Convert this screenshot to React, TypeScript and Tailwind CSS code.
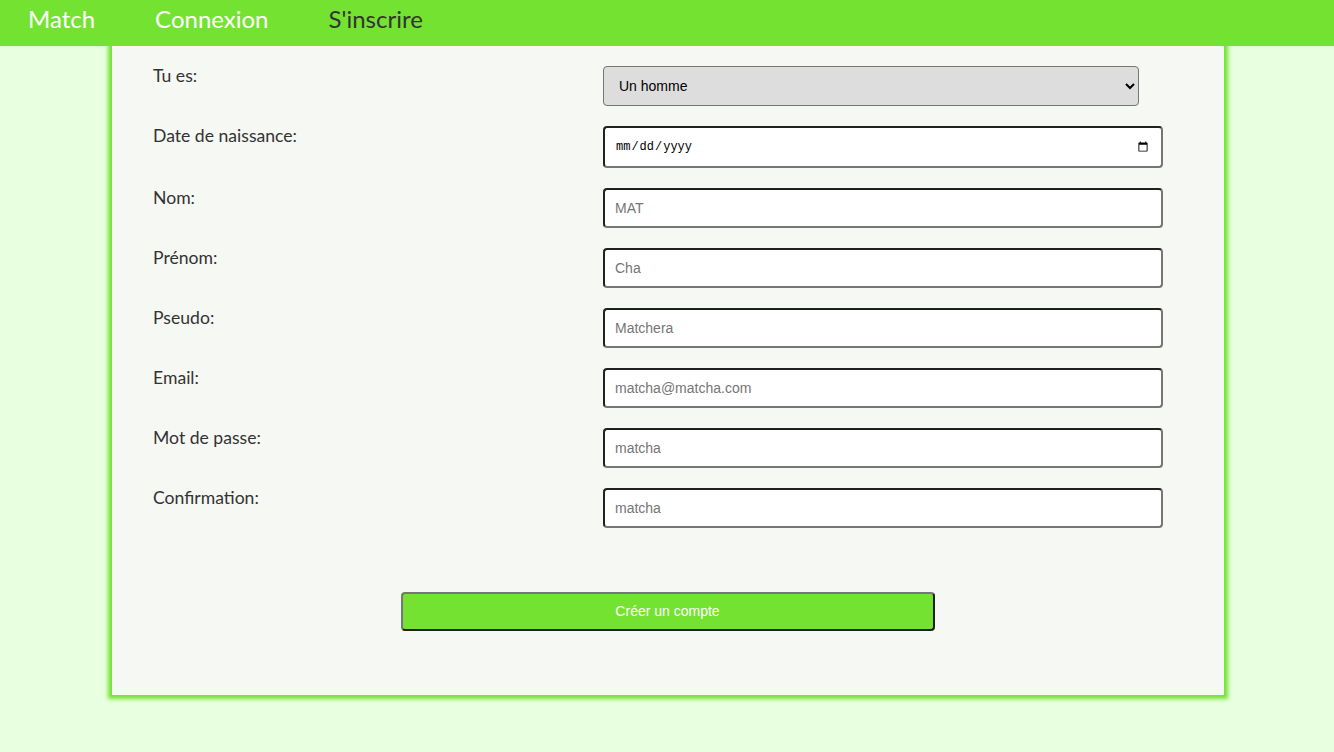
import { useState } from "react";

// Champs du formulaire d'inscription
type Field = {
  label: string;
  type: string;
  placeholder: string;
};

const fields: Field[] = [
  { label: "Nom:", type: "text", placeholder: "MAT" },
  { label: "Prénom:", type: "text", placeholder: "Cha" },
  { label: "Pseudo:", type: "text", placeholder: "Matchera" },
  { label: "Email:", type: "email", placeholder: "matcha@matcha.com" },
  { label: "Mot de passe:", type: "text", placeholder: "matcha" },
  { label: "Confirmation:", type: "text", placeholder: "matcha" },
];

const labelClass = "w-[450px] text-[17.6px] leading-[19px] text-[#333333]";

const inputClass =
  "w-[560px] h-[40px] px-[10px] bg-white border-2 border-[#767676] [border-style:inset] rounded-[4px] text-[14px] text-black placeholder:text-[#757575] font-['Liberation_Sans',Arial,sans-serif] outline-none";

export default function App() {
  const [genre, setGenre] = useState("homme");

  return (
    <div className="min-h-screen bg-[#e8ffe0] font-['Lato','Liberation_Sans',sans-serif]">
      {/* Barre de navigation */}
      <nav className="relative z-10 h-[46px] bg-[#74e231] flex items-center pb-[8px] pl-[28px] gap-[60px] text-[24px] leading-none">
        <span className="text-white">Match</span>
        <span className="text-white">Connexion</span>
        <span className="text-[#333333]">S'inscrire</span>
      </nav>

      {/* Carte du formulaire */}
      <div className="w-[1112px] ml-[112px] h-[649px] bg-[#f6f8f3] shadow-[0_0_4px_4px_#74e231] pt-[20px] pl-[41px]">
        <div className="flex flex-col gap-[20px]">
          <div className="flex items-start">
            <label className={labelClass}>Tu es:</label>
            <select
              value={genre}
              onChange={(e) => setGenre(e.target.value)}
              className="w-[536px] h-[40px] pl-[11px] pr-[4px] bg-[#dddddd] border border-[#767676] rounded-[4px] text-[14px] text-black font-['Liberation_Sans',Arial,sans-serif]"
            >
              <option value="homme">Un homme</option>
              <option value="femme">Une femme</option>
            </select>
          </div>

          <div className="flex items-start">
            <label className={labelClass}>Date de naissance:</label>
            <input
              type="date"
              className="w-[560px] h-[42px] px-[10px] bg-white border-2 border-[#767676] [border-style:inset] rounded-[4px] text-[12px] text-black font-['Liberation_Mono',monospace]"
            />
          </div>

          {fields.map((field) => (
            <div key={field.label} className="flex items-start">
              <label className={labelClass}>{field.label}</label>
              <input type={field.type} placeholder={field.placeholder} className={inputClass} />
            </div>
          ))}
        </div>

        <div className="flex justify-center pr-[42px] mt-[64px]">
          <button className="w-[534px] h-[39px] bg-[#74e231] border-2 border-[#767676] [border-style:outset] rounded-[4px] text-[14px] text-white font-['Liberation_Sans',Arial,sans-serif]">
            Créer un compte
          </button>
        </div>
      </div>
    </div>
  );
}
